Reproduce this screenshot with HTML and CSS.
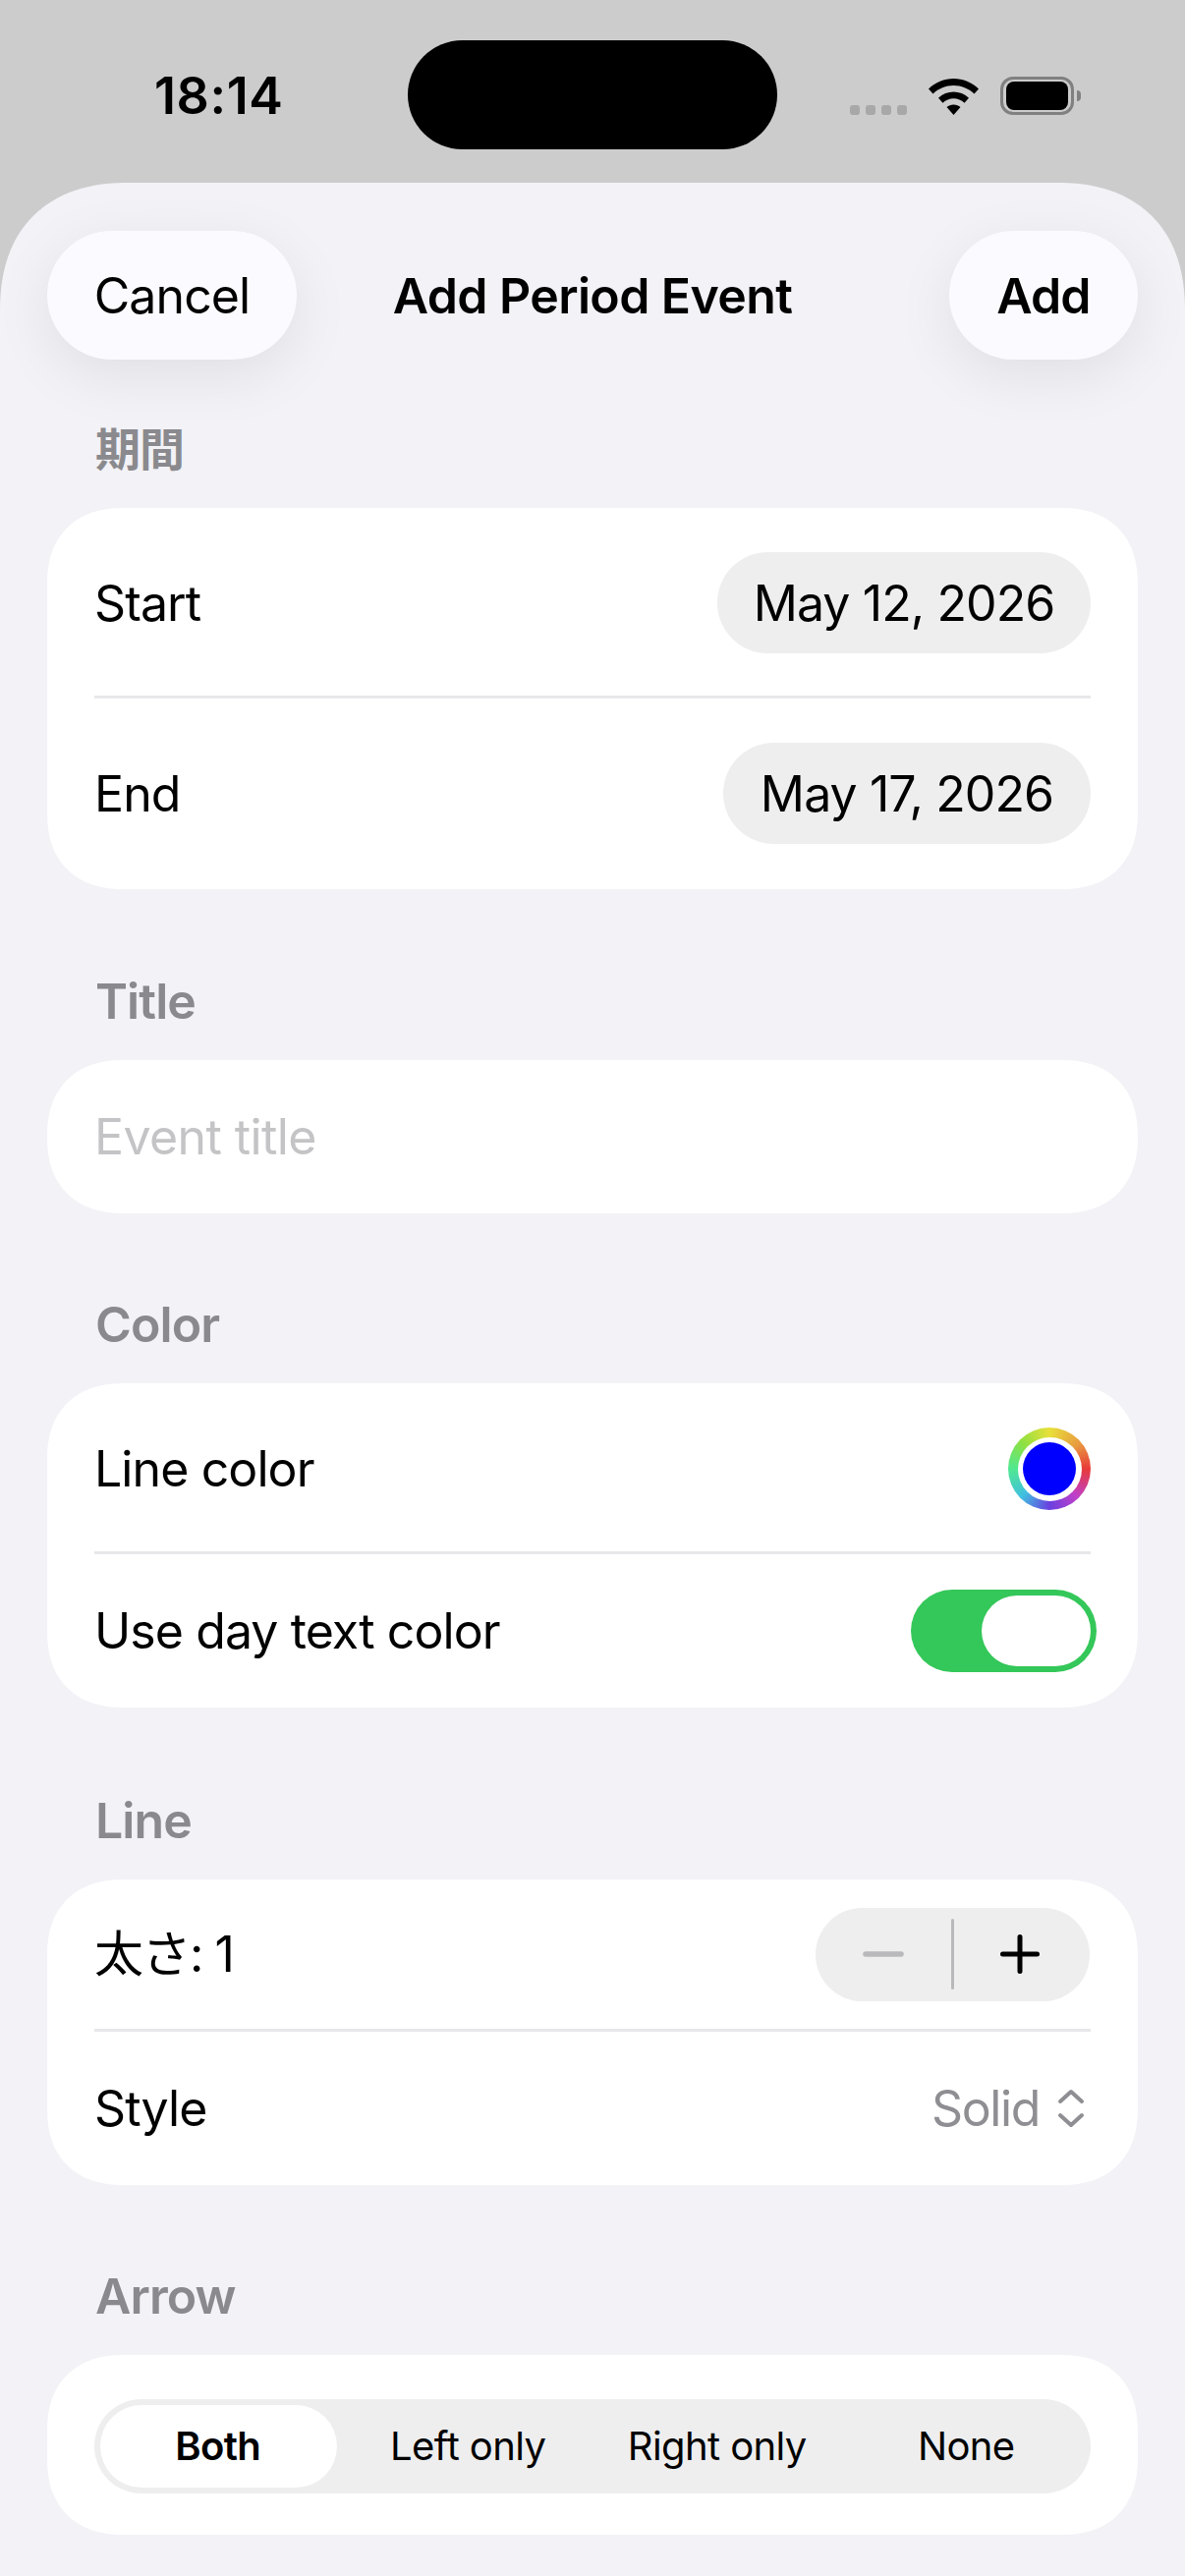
FILE: index.html
```html
<!DOCTYPE html>
<html lang="en">
<head>
<meta charset="utf-8">
<title>Add Period Event</title>
<link rel="stylesheet" href="styles.css">
</head>
<body>
<div class="status">
  <span class="time">18:14</span>
  <div class="island"></div>
  <div class="status-right">
    <div class="dots"><i></i><i></i><i></i><i></i></div>
    <svg class="wifi" width="51" height="37" viewBox="0 0 51 37"><path d="M25.5 0C35 0 44 3.700 51 10.500L46.500 15.500C40.800 10 33.300 7 25.500 7C17.700 7 10.200 10 4.500 15.500L0 10.500C7 3.700 16 0 25.500 0Z"/><path d="M25.500 13.500C31.300 13.500 36.800 15.700 41 19.700L36.500 24.700C33.500 21.900 29.600 20.300 25.500 20.300C21.400 20.300 17.500 21.900 14.500 24.700L10 19.700C14.200 15.700 19.700 13.500 25.500 13.500Z"/><path d="M25.500 26.500C28.300 26.500 30.600 27.400 32.500 29L25.500 37L18.500 29C20.400 27.400 22.700 26.500 25.500 26.500Z"/></svg>
    <div class="battery"><div class="battery-body"><div class="battery-fill"></div></div><div class="battery-cap"></div></div>
  </div>
</div>
<main class="sheet">
  <header class="nav">
    <div class="nav-btn nav-cancel">Cancel</div>
    <h1 class="nav-title">Add Period Event</h1>
    <div class="nav-btn nav-add">Add</div>
  </header>

  <section class="sec sec-period">
    <h2 class="sec-label sec-label-cjk">期間</h2>
    <div class="card">
      <div class="row row-date"><span>Start</span><span class="pill pill-start">May 12, 2026</span></div>
      <div class="sep"></div>
      <div class="row row-date-b"><span>End</span><span class="pill pill-end">May 17, 2026</span></div>
    </div>
  </section>

  <section class="sec sec-title">
    <h2 class="sec-label">Title</h2>
    <div class="card"><div class="row row-title"><span class="placeholder">Event title</span></div></div>
  </section>

  <section class="sec">
    <h2 class="sec-label">Color</h2>
    <div class="card">
      <div class="row row-well"><span>Line color</span>
        <div class="well"><div class="well-inner"><div class="well-dot"></div></div></div>
      </div>
      <div class="sep"></div>
      <div class="row row-toggle"><span>Use day text color</span>
        <div class="toggle"><div class="knob"></div></div>
      </div>
    </div>
  </section>

  <section class="sec sec-line">
    <h2 class="sec-label">Line</h2>
    <div class="card">
      <div class="row row-stepper"><span class="cjk-text">太さ: 1</span>
        <div class="stepper">
          <div class="step"><svg width="42" height="6" viewBox="0 0 42 6"><path d="M3 3H39" stroke="#b9b9bb" stroke-width="5.500" stroke-linecap="round"/></svg></div>
          <div class="step-div"></div>
          <div class="step step-plus"><svg width="40" height="40" viewBox="0 0 40 40"><path d="M2.500 20H37.500M20 2.500V37.500" stroke="#000" stroke-width="5" stroke-linecap="round"/></svg></div>
        </div>
      </div>
      <div class="sep"></div>
      <div class="row row-style"><span>Style</span>
        <div class="picker"><span class="picker-value">Solid</span>
          <svg width="28" height="40" viewBox="0 0 28 40"><path d="M3 13L14 3L25 13M3 27L14 37L25 27" fill="none" stroke="#8e8e93" stroke-width="4" stroke-linecap="round" stroke-linejoin="round"/></svg>
        </div>
      </div>
    </div>
  </section>

  <section class="sec">
    <h2 class="sec-label">Arrow</h2>
    <div class="card card-seg">
      <div class="seg">
        <div class="seg-item seg-on"><span>Both</span></div>
        <div class="seg-item"><span>Left only</span></div>
        <div class="seg-item"><span>Right only</span></div>
        <div class="seg-item"><span>None</span></div>
      </div>
    </div>
  </section>
</main>
</body>
</html>
```
FILE: styles.css
```css
* { box-sizing: border-box; }
html, body { margin: 0; padding: 0; }
body {
  width: 1206px;
  height: 2622px;
  overflow: hidden;
  background: #cccccc;
  color: #000;
  font-family: "Inter", "Noto Sans CJK JP", sans-serif;
  font-size: 50px;
  line-height: 60px;
  letter-spacing: -0.9px;
}

/* status bar */
.status {
  position: relative;
  height: 186px;
  display: flex;
  justify-content: space-between;
  padding: 70px 106px 0 157px;
}
.time { font-size: 52px; font-weight: 600; line-height: 56px; letter-spacing: 0.6px; }
.island {
  position: absolute;
  left: 415px;
  top: 41px;
  width: 376px;
  height: 111px;
  border-radius: 56px;
  background: #000;
}
.status-right { display: flex; align-items: flex-end; height: 48px; padding-bottom: 1px; }
.dots { display: flex; gap: 6px; margin-right: 22px; }
.dots i { width: 10px; height: 10px; border-radius: 3px; background: #a8a8a8; display: block; }
.wifi { display: block; margin-right: 22px; }
.battery { display: flex; align-items: center; }
.battery-body {
  width: 75px;
  height: 39px;
  border: 3px solid #808080;
  border-radius: 13px;
  padding: 2px 3px;
}
.battery-fill { width: 100%; height: 100%; background: #000; border-radius: 8px; }
.battery-cap { width: 4px; height: 11px; margin-left: 3px; background: #808080; border-radius: 0 4px 4px 0; }

/* sheet */
.sheet {
  height: 2436px;
  background: #f2f2f7;
  border-radius: 130px 130px 0 0;
  corner-shape: superellipse(1.2);
  overflow: hidden;
  padding: 49px 48px 0;
}
.nav { display: grid; grid-template-columns: 1fr auto 1fr; align-items: center; height: 131px; }
.nav-btn {
  height: 131px;
  border-radius: 66px;
  background: #fbfbff;
  display: flex;
  align-items: center;
  justify-content: center;
  box-shadow: 0 16px 60px rgba(0, 0, 0, 0.08);
}
.nav-cancel { width: 254px; }
.nav-add { width: 192px; font-weight: 600; justify-self: end; }
.nav-title { margin: 0; font-size: 50px; font-weight: 600; line-height: 60px; letter-spacing: -0.6px; }

/* sections */
.sec { margin-top: 85px; }
.sec-period { margin-top: 63px; }
.sec-title { margin-top: 86px; }
.sec-line { margin-top: 87px; }
.sec-label {
  margin: 0 0 32px 49px;
  font-size: 50px;
  font-weight: 600;
  line-height: 56px;
  color: #8a8a8e;
}
.sec-label-cjk { font-size: 46px; }
.card {
  background: #fff;
  border-radius: 78px;
  corner-shape: superellipse(1.2);
  padding: 0 48px;
}
.row { display: flex; align-items: center; justify-content: space-between; }
.row-date { height: 191px; padding-top: 2px; }
.row-date-b { height: 194px; padding-bottom: 1px; }
.row-title { height: 156px; }
.row-well { height: 171px; padding-top: 3px; }
.row-toggle { height: 156px; }
.row-stepper { height: 152px; }
.row-style { height: 156px; }
.sep { height: 3px; background: #e8e8ea; }
.cjk-text { letter-spacing: -1.5px; }

.pill {
  height: 103px;
  border-radius: 52px;
  background: #eeeeef;
  display: flex;
  align-items: center;
  justify-content: center;
}
.pill-start { width: 380px; }
.pill-end { width: 374px; }
.placeholder { color: #c4c4c6; letter-spacing: -0.6px; }

/* colour well */
.well {
  width: 84px;
  height: 84px;
  border-radius: 50%;
  background: conic-gradient(#e8e03a, #e89a40 50deg, #e83a3a 90deg, #c040c8 135deg, #6a40e0 180deg, #40c0e0 225deg, #50e890 270deg, #90e040 315deg, #e8e03a);
  display: flex;
  align-items: center;
  justify-content: center;
}
.well-inner {
  width: 65px;
  height: 65px;
  border-radius: 50%;
  background: #fff;
  display: flex;
  align-items: center;
  justify-content: center;
}
.well-dot { width: 54px; height: 54px; border-radius: 50%; background: #0000ff; }

/* toggle */
.toggle {
  width: 189px;
  height: 84px;
  border-radius: 42px;
  background: #34c759;
  margin-right: -6px;
  padding: 6px;
  display: flex;
  justify-content: flex-end;
}
.knob { width: 111px; height: 72px; border-radius: 36px; background: #fff; }

/* stepper */
.stepper {
  width: 279px;
  height: 95px;
  border-radius: 48px;
  background: #eeeeef;
  display: flex;
  align-items: center;
  margin-right: 1px;
}
.step { flex: 1; display: flex; align-items: center; justify-content: center; }
.step-plus svg { margin-right: 5px; }
.step-div { width: 3px; height: 72px; background: #b9b9bb; border-radius: 2px; }

/* picker */
.picker { display: flex; align-items: center; gap: 18px; color: #8e8e93; padding-right: 6px; }
.picker-value { letter-spacing: -1.4px; }
.picker svg { display: block; }

/* segmented */
.card-seg { padding: 45px 48px 42px; }
.seg {
  display: grid;
  grid-template-columns: repeat(4, 1fr);
  height: 96px;
  border-radius: 48px;
  background: #eeeeef;
  font-size: 40px;
  letter-spacing: -0.6px;
}
.seg-item { display: flex; align-items: center; justify-content: center; }
.seg-on {
  margin: 6px 7px 6px 6px;
  padding-right: 1px;
  border-radius: 42px;
  background: #fff;
  font-weight: 600;
}
```
